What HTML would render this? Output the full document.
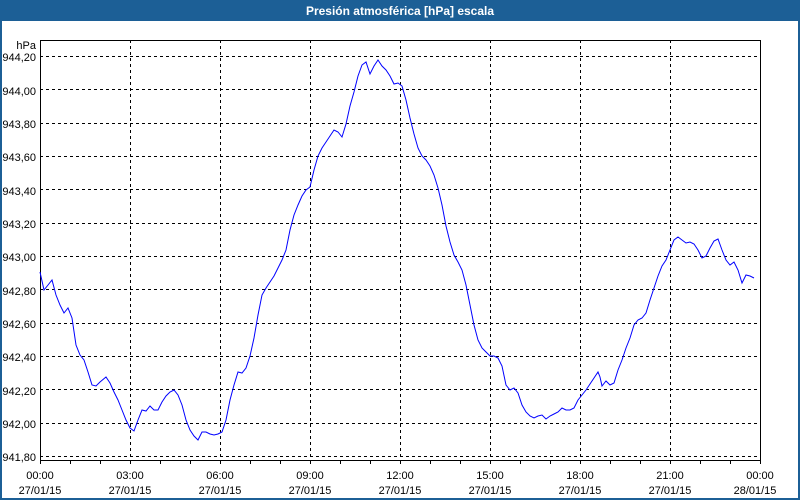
<!DOCTYPE html>
<html><head><meta charset="utf-8"><style>
html,body{margin:0;padding:0;width:800px;height:500px;overflow:hidden;background:#fff}
svg text{font-family:"Liberation Sans",sans-serif;font-size:11px;fill:#000}
</style></head><body>
<svg width="800" height="500" xmlns="http://www.w3.org/2000/svg">
<rect x="0" y="0" width="800" height="500" fill="#fff"/>
<rect x="0" y="0" width="800" height="21" fill="#1c5f96"/>
<rect x="0" y="0" width="2" height="500" fill="#1c5f96"/>
<rect x="798" y="0" width="2" height="500" fill="#1c5f96"/>
<rect x="0" y="498" width="800" height="2" fill="#1c5f96"/>
<text x="400" y="15" text-anchor="middle" style="fill:#fff;font-weight:bold;font-size:12px">Presión atmosférica [hPa] escala</text>
<g stroke="#000" stroke-width="1" stroke-dasharray="3,3" fill="none">
<line x1="40" y1="56.5" x2="760" y2="56.5"/><line x1="40" y1="89.5" x2="760" y2="89.5"/><line x1="40" y1="123.5" x2="760" y2="123.5"/><line x1="40" y1="156.5" x2="760" y2="156.5"/><line x1="40" y1="189.5" x2="760" y2="189.5"/><line x1="40" y1="223.5" x2="760" y2="223.5"/><line x1="40" y1="256.5" x2="760" y2="256.5"/><line x1="40" y1="289.5" x2="760" y2="289.5"/><line x1="40" y1="323.5" x2="760" y2="323.5"/><line x1="40" y1="356.5" x2="760" y2="356.5"/><line x1="40" y1="389.5" x2="760" y2="389.5"/><line x1="40" y1="423.5" x2="760" y2="423.5"/><line x1="40" y1="456.5" x2="760" y2="456.5"/>
<line x1="130.5" y1="40" x2="130.5" y2="460"/><line x1="220.5" y1="40" x2="220.5" y2="460"/><line x1="310.5" y1="40" x2="310.5" y2="460"/><line x1="400.5" y1="40" x2="400.5" y2="460"/><line x1="490.5" y1="40" x2="490.5" y2="460"/><line x1="580.5" y1="40" x2="580.5" y2="460"/><line x1="670.5" y1="40" x2="670.5" y2="460"/>
</g>
<rect x="40.5" y="40.5" width="720" height="420" fill="none" stroke="#000"/>
<g stroke="#000"><line x1="40.5" y1="460" x2="40.5" y2="464"/><line x1="70.5" y1="460" x2="70.5" y2="464"/><line x1="100.5" y1="460" x2="100.5" y2="464"/><line x1="130.5" y1="460" x2="130.5" y2="464"/><line x1="160.5" y1="460" x2="160.5" y2="464"/><line x1="190.5" y1="460" x2="190.5" y2="464"/><line x1="220.5" y1="460" x2="220.5" y2="464"/><line x1="250.5" y1="460" x2="250.5" y2="464"/><line x1="280.5" y1="460" x2="280.5" y2="464"/><line x1="310.5" y1="460" x2="310.5" y2="464"/><line x1="340.5" y1="460" x2="340.5" y2="464"/><line x1="370.5" y1="460" x2="370.5" y2="464"/><line x1="400.5" y1="460" x2="400.5" y2="464"/><line x1="430.5" y1="460" x2="430.5" y2="464"/><line x1="460.5" y1="460" x2="460.5" y2="464"/><line x1="490.5" y1="460" x2="490.5" y2="464"/><line x1="520.5" y1="460" x2="520.5" y2="464"/><line x1="550.5" y1="460" x2="550.5" y2="464"/><line x1="580.5" y1="460" x2="580.5" y2="464"/><line x1="610.5" y1="460" x2="610.5" y2="464"/><line x1="640.5" y1="460" x2="640.5" y2="464"/><line x1="670.5" y1="460" x2="670.5" y2="464"/><line x1="700.5" y1="460" x2="700.5" y2="464"/><line x1="730.5" y1="460" x2="730.5" y2="464"/><line x1="760.5" y1="460" x2="760.5" y2="464"/></g>
<g text-anchor="end">
<text x="36" y="49">hPa</text>
<text x="36" y="61">944,20</text><text x="36" y="95">944,00</text><text x="36" y="128">943,80</text><text x="36" y="161">943,60</text><text x="36" y="195">943,40</text><text x="36" y="228">943,20</text><text x="36" y="261">943,00</text><text x="36" y="295">942,80</text><text x="36" y="328">942,60</text><text x="36" y="361">942,40</text><text x="36" y="395">942,20</text><text x="36" y="428">942,00</text><text x="36" y="461">941,80</text>
</g>
<g text-anchor="middle">
<text x="40" y="479">00:00</text><text x="40" y="494">27/01/15</text>
<text x="130" y="479">03:00</text><text x="130" y="494">27/01/15</text>
<text x="220" y="479">06:00</text><text x="220" y="494">27/01/15</text>
<text x="310" y="479">09:00</text><text x="310" y="494">27/01/15</text>
<text x="400" y="479">12:00</text><text x="400" y="494">27/01/15</text>
<text x="490" y="479">15:00</text><text x="490" y="494">27/01/15</text>
<text x="580" y="479">18:00</text><text x="580" y="494">27/01/15</text>
<text x="670" y="479">21:00</text><text x="670" y="494">27/01/15</text>
<text x="760" y="479">00:00</text><text x="755" y="494">28/01/15</text>
</g>
<polyline fill="none" stroke="#0000ff" stroke-width="1" points="40,272 44,290 48,285 52,280 56,295 60,305 64,313 68,308 72,318 76,345 80,355 84,360 88,372 92,385 96,386 100,382 106,377 110,383 114,392 118,400 122,410 126,420 130,428 134,431 138,420 142,410 146,411 150,406 154,410 158,410 162,402 166,396 170,392 174,390 178,395 182,405 186,420 190,430 194,436 198,440 202,432 206,432 210,434 214,435 218,434 222,432 226,420 230,400 234,385 238,372 242,373 246,368 250,356 254,338 258,315 262,295 266,288 270,282 274,276 278,268 282,260 286,250 290,230 294,215 298,205 302,196 306,190 310,187 314,170 318,156 322,148 326,142 330,136 334,130 338,132 342,137 346,124 350,106 354,92 358,76 362,65 366,62 370,74 374,66 378,60 382,66 386,70 390,76 394,84 398,83 402,86 406,100 410,118 414,134 418,148 422,156 426,160 430,166 434,175 438,188 442,205 446,226 450,242 454,255 458,262 462,270 466,285 470,305 474,325 478,340 482,348 486,352 490,356 494,356 498,358 502,366 506,385 510,390 514,388 518,393 522,405 526,412 530,416 534,418 538,416 542,415 546,419 550,416 554,414 558,412 562,408 566,410 570,410 574,408 578,400 582,395 586,390 590,384 594,378 598,372 600,377 602,386 606,381 610,385 614,383 618,370 622,360 626,348 630,338 634,325 638,320 642,318 646,313 650,300 654,288 658,276 662,266 666,260 670,250 674,240 678,237 682,240 686,243 690,242 694,244 698,250 702,258 706,256 710,248 714,241 718,239 722,250 726,260 730,265 734,262 738,270 742,283 746,275 750,276 754,278"/>
</svg>
</body></html>
